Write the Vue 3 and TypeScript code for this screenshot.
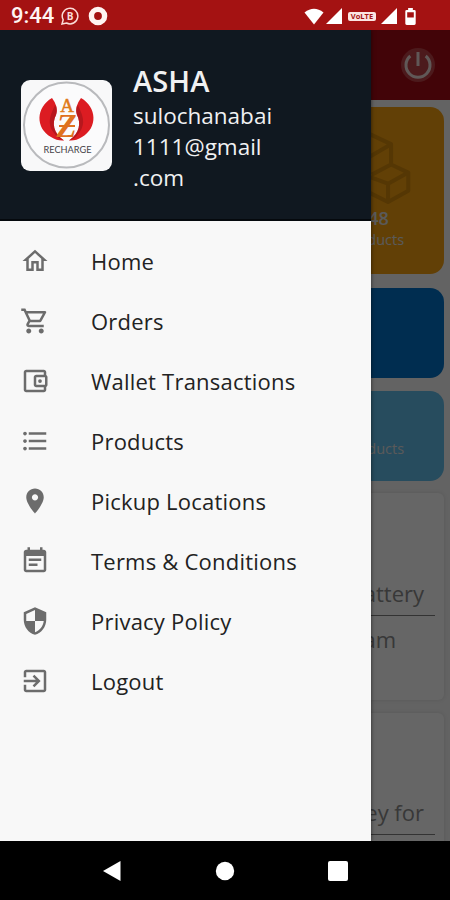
<script setup lang="ts">
interface MenuItem {
  label: string
  icon: string
}

const menu: MenuItem[] = [
  { label: 'Home', icon: 'M12 5.69l5 4.5V18h-2v-6H9v6H7v-7.81l5-4.5M12 3L2 12h3v8h6v-6h2v6h6v-8h3L12 3z' },
  { label: 'Orders', icon: 'M15.55 13c.75 0 1.41-.41 1.75-1.03l3.58-6.49c.37-.66-.11-1.48-.87-1.48H5.21l-.94-2H1v2h2l3.6 7.59-1.35 2.44C4.52 15.37 5.48 17 7 17h12v-2H7l1.1-2h7.45zM6.16 6h12.15l-2.76 5H8.53L6.16 6zM7 18c-1.1 0-1.99.9-1.99 2S5.9 22 7 22s2-.9 2-2-.9-2-2-2zm10 0c-1.1 0-1.99.9-1.99 2s.89 2 1.99 2 2-.9 2-2-.9-2-2-2z' },
  { label: 'Wallet Transactions', icon: 'M21 7.28V5c0-1.1-.9-2-2-2H5c-1.11 0-2 .9-2 2v14c0 1.1.89 2 2 2h14c1.1 0 2-.9 2-2v-2.28c.59-.35 1-.98 1-1.72V9c0-.74-.41-1.37-1-1.72zM20 9v6h-7V9h7zM5 19V5h14v2h-6c-1.1 0-2 .9-2 2v6c0 1.1.9 2 2 2h6v2H5zM16 10.500a1.500 1.500 0 1 0 0 3a1.500 1.500 0 1 0 0-3z' },
  { label: 'Products', icon: 'M4 10.500c-.83 0-1.500.67-1.500 1.500s.67 1.500 1.500 1.500 1.500-.67 1.500-1.500-.67-1.500-1.500-1.500zm0-6c-.83 0-1.500.67-1.500 1.500S3.170 7.500 4 7.500 5.500 6.830 5.500 6 4.830 4.500 4 4.500zm0 12c-.83 0-1.500.68-1.500 1.500s.68 1.500 1.500 1.500 1.500-.68 1.500-1.500-.67-1.500-1.500-1.500zM7 19h14v-2H7v2zm0-6h14v-2H7v2zm0-8v2h14V5H7z' },
  { label: 'Pickup Locations', icon: 'M12 2C8.13 2 5 5.13 5 9c0 5.25 7 13 7 13s7-7.75 7-13c0-3.87-3.13-7-7-7zm0 9.500c-1.380 0-2.500-1.120-2.500-2.500s1.120-2.500 2.500-2.500 2.500 1.120 2.500 2.500-1.120 2.500-2.500 2.500z' },
  { label: 'Terms & Conditions', icon: 'M17 10H7v2h10v-2zm2-7h-1V1h-2v2H8V1H6v2H5c-1.110 0-1.990.9-1.990 2L3 19c0 1.100.890 2 2 2h14c1.100 0 2-.9 2-2V5c0-1.100-.9-2-2-2zm0 16H5V8h14v11zm-5-5H7v2h7v-2z' },
  { label: 'Privacy Policy', icon: 'M12 1L3 5v6c0 5.550 3.840 10.740 9 12 5.160-1.260 9-6.450 9-12V5l-9-4zm0 10.990h7c-.530 4.120-3.280 7.790-7 8.940V12H5V6.300l7-3.110v8.800z' },
  { label: 'Logout', icon: 'M10.090 15.590L11.500 17l5-5-5-5-1.410 1.410L12.670 11H3v2h9.670l-2.580 2.590zM19 3H5c-1.110 0-2 .9-2 2v4h2V5h14v14H5v-4H3v4c0 1.100.890 2 2 2h14c1.100 0 2-.9 2-2V5c0-1.100-.9-2-2-2z' },
]

const emailLines: string[] = ['sulochanabai', '1111@gmail', '.com']
</script>

<template>
  <div class="phone">
    <header class="status">
      <span class="time">9:44</span>
      <svg class="chat" viewBox="0 0 18 18">
        <path d="M1 17L2.200 12.800A7.800 7.800 0 1 1 5.500 16Z" fill="none" stroke="#fbdcd8" stroke-width="1.500" />
        <text x="9.200" y="12.700" text-anchor="middle">B</text>
      </svg>
      <svg class="ring" viewBox="0 0 20 20">
        <circle cx="10" cy="10" r="6.600" fill="none" stroke="#fff4f2" stroke-width="5.400" />
      </svg>
      <div class="signals">
        <svg width="20" height="17" viewBox="0 0 20 17"><path d="M.5 4.500Q10-3 19.500 4.500L10 16.500Z" fill="#fff" /></svg>
        <svg class="cell" width="16" height="16" viewBox="0 0 16 16"><path d="M16 0V16H0Z" fill="#fff" /></svg>
        <span class="volte">VoLTE</span>
        <svg class="cell second" width="16" height="16" viewBox="0 0 16 16"><path d="M16 0V16H0Z" fill="#fff" /></svg>
        <svg class="battery" width="11" height="17" viewBox="0 0 11 18">
          <path d="M3 0H8V2H9.500Q11 2 11 3.500V16.500Q11 18 9.500 18H1.500Q0 18 0 16.500V3.500Q0 2 1.500 2H3ZM2 4.500V10H9V4.500Z" fill="#fff" fill-rule="evenodd" />
        </svg>
      </div>
    </header>

    <div class="stage">
      <main class="page">
        <div class="appbar">
          <svg class="power" viewBox="0 0 36 36">
            <circle cx="18" cy="18" r="17" fill="#bd4248" />
            <path d="M10.300 9A12 12 0 1 0 25.700 9M18 5V19" fill="none" stroke="#f1ddd9" stroke-width="3" />
          </svg>
        </div>
        <div class="cards">
          <section class="card orange">
            <svg class="boxes" viewBox="0 0 80 76">
              <path d="M2 17L24 5L45 15V35L62 43V61L42 72L22 62M2 17L23 28L45 15M23 28V47L42 54L62 43M42 54V72M45 35L26 45M23 28L2 17V51L22 62V46" />
            </svg>
            <strong>48</strong>
            <span>Products</span>
          </section>
          <section class="card blue"></section>
          <section class="card sky"><span>Products</span></section>
        </div>
        <section class="panel first">
          <p class="row lined">attery</p>
          <p class="row short">am</p>
        </section>
        <section class="panel second">
          <p class="row lined">ey for</p>
        </section>
      </main>
      <div class="scrim"></div>

      <aside class="drawer">
        <div class="profile">
          <div class="avatar">
            <svg viewBox="0 0 91 91">
              <circle cx="45.500" cy="45" r="42.500" fill="#fbfbfc" stroke="#b9babd" stroke-width="2" />
              <path d="M31 18C15 27 14 48 30 57Q36 61 43 60.500C32 53 31 43 35 35Q38 27 31 18Z" fill="#dc1c22" />
              <path d="M60 18C76 27 77 48 61 57Q55 61 48 60.500C59 53 60 43 56 35Q53 27 60 18Z" fill="#dc1c22" />
              <path d="M34 25C32 31 24 42 33 53Q37 59 43 60.500C32 53 31 43 35 35Q37 30 34 25ZM57 25C59 31 67 42 58 53Q54 59 48 60.500C59 53 60 43 56 35Q54 30 57 25Z" fill="#a7151b" opacity=".7" />
              <text class="letter-a" x="46" y="32" text-anchor="middle">A</text>
              <text class="letter-z" x="45.500" y="57" text-anchor="middle">Z</text>
              <path d="M38 46H54" stroke="#df711f" stroke-width="2" />
              <text class="brand" x="46.500" y="73" text-anchor="middle" textLength="48" lengthAdjust="spacingAndGlyphs">RECHARGE</text>
            </svg>
          </div>
          <div class="identity">
            <h1>ASHA</h1>
            <div v-for="line in emailLines" :key="line" class="email">{{ line }}</div>
          </div>
        </div>
        <nav class="menu">
          <a v-for="item in menu" :key="item.label" class="item">
            <svg viewBox="0 0 24 24"><path :d="item.icon" /></svg>
            <span>{{ item.label }}</span>
          </a>
        </nav>
      </aside>
    </div>

    <footer class="keys">
      <svg viewBox="0 0 20 22"><path d="M1 11L18.500 1V21Z" /></svg>
      <svg viewBox="0 0 20 22"><circle cx="10" cy="11" r="9.200" /></svg>
      <svg viewBox="0 0 20 22"><rect x="0" y="1" width="20" height="20" rx="2" /></svg>
    </footer>
  </div>
</template>

<style>
body {
  margin: 0;
  background: #000;
}
</style>

<style scoped>
.phone {
  width: 450px;
  height: 900px;
  display: flex;
  flex-direction: column;
  overflow: hidden;
  font-family: "Open Sans", "Noto Sans", sans-serif;
}
.phone svg {
  display: block;
  flex: none;
}
.status {
  height: 30px;
  box-sizing: border-box;
  flex: none;
  display: flex;
  align-items: center;
  padding: 2px 34px 0 11px;
  background: #a41212;
}
.time {
  width: 44px;
  font: 500 22px/28px Roboto, sans-serif;
  color: #fff4f2;
}
.chat {
  width: 18px;
  height: 18px;
  margin-left: 6px;
}
.chat text {
  font: 700 10px "Open Sans", sans-serif;
  fill: #fbdcd8;
}
.ring {
  width: 20px;
  height: 20px;
  margin-left: 9px;
}
.signals {
  display: flex;
  align-items: center;
  margin-left: auto;
}
.cell {
  margin-left: 2px;
}
.volte {
  width: 28px;
  height: 9px;
  margin-left: 6px;
  border-radius: 2px;
  background: #fbe5e2;
  color: #a41212;
  font: 700 7.500px/9px "Open Sans", sans-serif;
  text-align: center;
}
.second {
  margin-left: 5px;
}
.battery {
  margin-left: 8px;
}
.stage {
  position: relative;
  flex: 1;
  overflow: hidden;
}
.page {
  height: 100%;
  background: #f7f7f7;
}
.appbar {
  height: 70px;
  box-sizing: border-box;
  display: flex;
  justify-content: flex-end;
  align-items: center;
  padding-right: 14px;
  background: #a60c14;
}
.power {
  width: 36px;
  height: 36px;
}
.cards {
  display: flex;
  flex-direction: column;
  align-items: flex-end;
  padding: 7px 6px 0 0;
}
.card {
  width: 137px;
  height: 90px;
  box-sizing: border-box;
  border-radius: 14px;
  display: flex;
  flex-direction: column;
  align-items: center;
  color: #e0e0e0;
}
.card span {
  font-size: 14.500px;
  line-height: 20px;
  padding-right: 3px;
}
.orange {
  height: 167px;
  background: #f5a010;
  padding-top: 22px;
}
.orange strong {
  font-size: 18px;
  font-weight: 600;
  line-height: 23px;
  padding: 1px 0 0 6px;
}
.boxes {
  width: 86px;
  height: 77px;
  margin-left: 21px;
}
.boxes path {
  fill: none;
  stroke: #d48a0a;
  stroke-width: 4;
  stroke-linejoin: round;
}
.blue {
  height: 90px;
  margin-top: 14px;
  background: #0072c8;
}
.sky {
  margin-top: 13px;
  background: #62bdea;
  padding-top: 48px;
}
.panel {
  box-sizing: border-box;
  margin: 12px 6px 0;
  padding: 0 9px 0 0;
  border-radius: 6px;
  background: #fff;
  box-shadow: 0 0 4px #dcdcdc;
  color: #8d8d8d;
}
.first {
  height: 207px;
  padding-top: 81px;
}
.second.panel {
  height: 206px;
  margin-top: 13px;
  padding-top: 80px;
}
.row {
  margin: 0 0 0 200px;
  font-size: 22px;
  line-height: 38px;
  text-align: right;
}
.lined {
  padding: 0 11px 3px 0;
  border-bottom: 1px solid #808080;
}
.short {
  padding: 4px 39px 0 0;
}
.scrim {
  position: absolute;
  inset: 0;
  background: rgba(0, 0, 0, 0.6);
}
.drawer {
  position: absolute;
  inset: 0 auto 0 0;
  width: 370.500px;
  background: #f8f8f8;
  box-shadow: 0 0 4px rgba(0, 0, 0, 0.6);
}
.profile {
  height: 191px;
  box-sizing: border-box;
  display: flex;
  align-items: flex-start;
  padding: 0 0 0 21px;
  background: #101820;
  border-bottom: 2px solid #05090d;
}
.avatar {
  width: 91px;
  height: 91px;
  margin: 50px 1px 0 0;
  border-radius: 9px;
  background: #f8f8f9;
  overflow: hidden;
}
.letter-a {
  font: 19px "Liberation Serif", serif;
  fill: #e07a18;
  stroke: #e07a18;
  stroke-width: 0.5px;
}
.letter-z {
  font: italic 700 33px "Liberation Serif", serif;
  fill: #df711f;
}
.brand {
  font: 10px Lato, sans-serif;
  fill: #464349;
}
.identity {
  margin: 31px 0 0 20px;
  color: #f0f1f2;
}
.identity h1 {
  margin: 0;
  font-size: 29px;
  font-weight: 600;
  line-height: 39px;
  letter-spacing: 0.1px;
}
.email {
  font-size: 22.500px;
  line-height: 31px;
}
.menu {
  padding-top: 10px;
}
.item {
  height: 60px;
  display: flex;
  align-items: center;
  gap: 41px;
  padding-left: 20px;
  color: #222;
  font-size: 22px;
  line-height: 30px;
  letter-spacing: 0.22px;
}
.item svg {
  width: 30px;
  height: 30px;
  fill: #6c6c6c;
}
.keys {
  height: 59px;
  flex: none;
  display: flex;
  justify-content: center;
  align-items: center;
  gap: 93px;
  background: #000;
}
.keys svg {
  width: 20px;
  height: 22px;
  fill: #fff;
}
</style>
